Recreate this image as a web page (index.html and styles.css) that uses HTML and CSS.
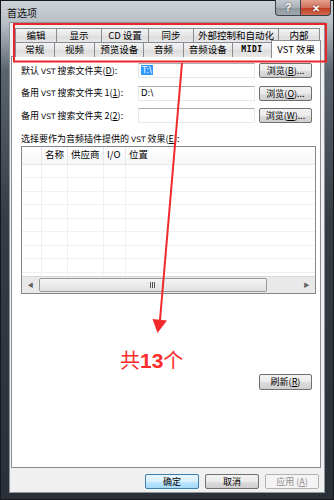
FILE: index.html
```html
<!DOCTYPE html>
<html lang="zh-CN">
<head>
  <meta charset="UTF-8">
  <title>首选项</title>
  <link rel="stylesheet" href="styles.css">
</head>
<body>
  <div class="window">
    <!-- Barra de título -->
    <div class="titlebar">
      <span class="title">首选项</span>
      <div class="caption-buttons">
        <span class="cap-btn help">?</span>
        <span class="cap-btn close">✕</span>
      </div>
    </div>

    <div class="client">
      <!-- Abas em duas linhas -->
      <div class="tabs">
        <div class="tab-row back">
          <span class="tab">编辑</span>
          <span class="tab">显示</span>
          <span class="tab">CD 设置</span>
          <span class="tab">同步</span>
          <span class="tab">外部控制和自动化</span>
          <span class="tab">内部</span>
        </div>
        <div class="tab-row front">
          <span class="tab">常规</span>
          <span class="tab">视频</span>
          <span class="tab">预览设备</span>
          <span class="tab">音频</span>
          <span class="tab">音频设备</span>
          <span class="tab mono">MIDI</span>
          <span class="tab active">VST 效果</span>
        </div>
      </div>

      <div class="tab-page">
        <div class="field-row">
          <label class="field-label">默认 <span class="lat">VST</span> 搜索文件夹(<u>D</u>):</label>
          <div class="textbox"><span class="selected">T:\</span></div>
          <button class="btn">浏览(<u>B</u>)...</button>
        </div>
        <div class="field-row">
          <label class="field-label">备用 <span class="lat">VST</span> 搜索文件夹 1(<u>1</u>):</label>
          <div class="textbox">D:\</div>
          <button class="btn">浏览(<u>O</u>)...</button>
        </div>
        <div class="field-row">
          <label class="field-label">备用 <span class="lat">VST</span> 搜索文件夹 2(<u>2</u>):</label>
          <div class="textbox"></div>
          <button class="btn">浏览(<u>W</u>)...</button>
        </div>

        <div class="list-label">选择要作为音频插件提供的 <span class="lat">VST</span> 效果(<u>E</u>):</div>

        <!-- Lista de efeitos -->
        <div class="listview">
          <div class="lv-row lv-header">
            <span class="cell"></span>
            <span class="cell">名称</span>
            <span class="cell">供应商</span>
            <span class="cell">I/O</span>
            <span class="cell">位置</span>
          </div>
          <div class="lv-body">
            <div class="lv-row"><span class="cell"></span><span class="cell"></span><span class="cell"></span><span class="cell"></span><span class="cell"></span></div>
            <div class="lv-row"><span class="cell"></span><span class="cell"></span><span class="cell"></span><span class="cell"></span><span class="cell"></span></div>
            <div class="lv-row"><span class="cell"></span><span class="cell"></span><span class="cell"></span><span class="cell"></span><span class="cell"></span></div>
            <div class="lv-row"><span class="cell"></span><span class="cell"></span><span class="cell"></span><span class="cell"></span><span class="cell"></span></div>
            <div class="lv-row"><span class="cell"></span><span class="cell"></span><span class="cell"></span><span class="cell"></span><span class="cell"></span></div>
            <div class="lv-row"><span class="cell"></span><span class="cell"></span><span class="cell"></span><span class="cell"></span><span class="cell"></span></div>
            <div class="lv-row"><span class="cell"></span><span class="cell"></span><span class="cell"></span><span class="cell"></span><span class="cell"></span></div>
            <div class="lv-row"><span class="cell"></span><span class="cell"></span><span class="cell"></span><span class="cell"></span><span class="cell"></span></div>
            <div class="lv-row"><span class="cell"></span><span class="cell"></span><span class="cell"></span><span class="cell"></span><span class="cell"></span></div>
          </div>
          <div class="hscroll">
            <span class="sb-arrow">&#9664;</span>
            <div class="sb-track"><span class="sb-thumb"><span class="grip"></span></span></div>
            <span class="sb-arrow">&#9654;</span>
          </div>
        </div>

        <div class="refresh-row">
          <button class="btn">刷新(<u>R</u>)</button>
        </div>
      </div>

      <div class="dialog-buttons">
        <button class="btn default">确定</button>
        <button class="btn">取消</button>
        <button class="btn" disabled>应用 (<u>A</u>)</button>
      </div>
    </div>

    <!-- Anotação vermelha sobre a captura -->
    <svg class="annotation" width="334" height="500" viewBox="0 0 334 500">
      <rect x="14" y="24" width="312" height="37.5" fill="none" stroke="#e8262b" stroke-width="2"/>
      <line x1="182" y1="63" x2="160" y2="320" stroke="#f02a2a" stroke-width="2"/>
      <polygon points="152.5,319 167,320.5 157.5,333" fill="#f02a2a"/>
    </svg>
    <div class="count-note">共<b>13</b>个</div>
  </div>
</body>
</html>
```

FILE: styles.css
```css
/* Reset básico */
* {
  box-sizing: border-box;
  margin: 0;
  padding: 0;
}

body {
  width: 334px;
  height: 500px;
  overflow: hidden;
  font-family: "Noto Sans CJK SC", "Liberation Sans", sans-serif;
  font-size: 9px;
  line-height: 1;
  color: #000;
  background: #2a3037;
}

/* Moldura da janela */
.window {
  position: relative;
  width: 334px;
  height: 500px;
  display: flex;
  flex-direction: column;
  padding: 0 8px 6px 8px;
  border: 1px solid #15191d;
  background: linear-gradient(to bottom, #cdd2d7 0, #b8bfc6 22px, #5a646e 70px, #353c44 220px, #2a3037 100%);
}

.titlebar {
  height: 21px;
  display: flex;
  justify-content: space-between;
  align-items: flex-start;
}

.title {
  margin: 7px 0 0 -2px;
  font-size: 10px;
  color: #111;
}

.caption-buttons {
  display: flex;
  margin-top: -1px;
  margin-right: -6px;
}

.cap-btn {
  height: 16px;
  display: flex;
  align-items: center;
  justify-content: center;
  color: #fff;
  font-weight: bold;
  border: 1px solid #3b4249;
  border-top: none;
}

.cap-btn.help {
  width: 25px;
  font-family: "Liberation Sans", sans-serif;
  font-size: 11px;
  border-radius: 0 0 0 4px;
  border-right: none;
  background: linear-gradient(to bottom, #c3c9cf 0, #a9b1b8 50%, #8e969e 51%, #a1a9b0 100%);
  text-shadow: 0 0 2px #333;
}

.cap-btn.close {
  width: 31px;
  font-size: 10px;
  border-radius: 0 0 4px 0;
  background: linear-gradient(to bottom, #e5a08f 0, #d0715c 50%, #bd3a20 51%, #cf6a4e 100%);
  text-shadow: 0 0 2px #5a1a10;
}

.client {
  flex: 1;
  display: flex;
  flex-direction: column;
  background: #f0f0f0;
  border: 1px solid #8e959c;
  padding: 5px 3px 0 1px;
}

/* Abas */
.tabs {
  padding-left: 4px;
  position: relative;
  z-index: 1;
}

.tab-row {
  display: flex;
  height: 14px;
}

.tab {
  height: 15px;
  display: flex;
  align-items: center;
  justify-content: center;
  border: 1px solid #898c95;
  border-bottom: none;
  border-right: none;
  background: linear-gradient(to bottom, #f3f3f3, #e5e5e5 50%, #dcdcdc 51%, #e9e9e9);
  font-size: 9.5px;
}

.tab:last-child {
  border-right: 1px solid #898c95;
}

.tab-row.back .tab:nth-child(1) { width: 41px; }
.tab-row.back .tab:nth-child(2) { width: 45px; }
.tab-row.back .tab:nth-child(3) { width: 47px; }
.tab-row.back .tab:nth-child(4) { width: 45px; }
.tab-row.back .tab:nth-child(5) { width: 85px; }
.tab-row.back .tab:nth-child(6) { width: 42px; }

.tab-row.front .tab:nth-child(1) { width: 39px; }
.tab-row.front .tab:nth-child(2) { width: 41px; }
.tab-row.front .tab:nth-child(3) { width: 49px; }
.tab-row.front .tab:nth-child(4) { width: 40px; }
.tab-row.front .tab:nth-child(5) { width: 49px; }
.tab-row.front .tab:nth-child(6) { width: 40px; }

.tab.mono {
  font-family: "DejaVu Sans Mono", monospace;
  font-size: 8px;
  font-weight: bold;
  letter-spacing: 0.5px;
}

.tab.active {
  width: 50px;
  height: 18px;
  margin-top: -2px;
  background: #fff;
  border-right: 1px solid #898c95;
  padding-top: 1px;
}

.lat {
  font-family: "DejaVu Sans", sans-serif;
  font-size: 7.5px;
}

/* Página da aba */
.tab-page {
  height: 412px;
  background: #fff;
  border: 1px solid #898c95;
  padding: 6px 8px 0 9px;
  display: flex;
  flex-direction: column;
}

.field-row {
  display: flex;
  align-items: center;
  height: 15px;
  margin-bottom: 7.5px;
}

.field-label {
  width: 117px;
  white-space: nowrap;
}

.textbox {
  width: 117px;
  height: 15px;
  border: 1px solid #e3e9ef;
  border-top-color: #abadb3;
  padding: 2px 2px 0;
  font-family: "DejaVu Sans", sans-serif;
  font-size: 8.5px;
}

.selected {
  background: #3399ff;
  color: #fff;
  padding: 0 1px;
}

.btn {
  height: 15px;
  border: 1px solid #707070;
  border-radius: 2px;
  background: linear-gradient(to bottom, #f2f2f2, #ebebeb 50%, #dddddd 51%, #cfcfcf);
  font-family: inherit;
  font-size: 9px;
  color: #000;
  display: flex;
  align-items: center;
  justify-content: center;
}

.field-row .btn {
  width: 53px;
  margin-left: auto;
}

.btn.default {
  border-color: #3c7fb1;
  background: linear-gradient(to bottom, #eaf6fd, #d9f0fc 50%, #bee6fd 51%, #a7d9f5);
}

.btn:disabled {
  border-color: #adb2b5;
  background: #f4f4f4;
  color: #8d8d8d;
}

.list-label {
  margin-top: 3px;
  height: 12px;
  white-space: nowrap;
}

/* Lista */
.listview {
  width: 295px;
  border: 1px solid #828790;
  display: flex;
  flex-direction: column;
}

.lv-row {
  display: flex;
  height: 13.5px;
  border-bottom: 1px solid #f0f0f0;
}

.lv-row .cell {
  border-right: 1px solid #f0f0f0;
  display: flex;
  align-items: center;
  padding-left: 3px;
}

.lv-row .cell:nth-child(1) { width: 20px; }
.lv-row .cell:nth-child(2) { width: 26px; }
.lv-row .cell:nth-child(3) { width: 36px; }
.lv-row .cell:nth-child(4) { width: 22px; }
.lv-row .cell:nth-child(5) { flex: 1; border-right: none; }

.lv-header {
  height: 18px;
  background: linear-gradient(to bottom, #ffffff, #f6f7f8);
  border-bottom: 1px solid #e5e5e5;
}

.lv-header .cell {
  border-right-color: #e5e5e5;
  font-size: 9.5px;
}

.lv-body {
  height: 111px;
  overflow: hidden;
}

.hscroll {
  height: 17px;
  display: flex;
  background: #e9e9e9;
  border-top: 1px solid #d8d8d8;
}

.sb-arrow {
  width: 17px;
  display: flex;
  align-items: center;
  justify-content: center;
  font-size: 6px;
  color: #606060;
}

.sb-track {
  flex: 1;
  padding: 1px 0;
}

.sb-thumb {
  display: flex;
  align-items: center;
  justify-content: center;
  width: 228px;
  height: 100%;
  border: 1px solid #9a9a9a;
  border-radius: 2px;
  background: linear-gradient(to bottom, #f4f4f4, #e1e1e1);
}

.grip {
  width: 6px;
  height: 6px;
  background: repeating-linear-gradient(to right, #555 0, #555 1px, #eee 1px, #eee 2px);
}

.refresh-row {
  display: flex;
  justify-content: flex-end;
  margin-top: 80px;
}

.refresh-row .btn {
  width: 53px;
  height: 16px;
}

.dialog-buttons {
  display: flex;
  justify-content: flex-end;
  gap: 6px;
  padding: 6px 2px 0 0;
}

.dialog-buttons .btn {
  width: 54px;
  height: 15px;
}

/* Anotações */
.annotation {
  position: absolute;
  left: -1px;
  top: -1px;
  pointer-events: none;
}

.count-note {
  position: absolute;
  left: 119px;
  top: 349px;
  font-size: 20px;
  color: #ff2b2b;
}

.count-note b {
  font-family: "Liberation Sans", sans-serif;
  font-weight: bold;
  font-size: 21px;
}
```
